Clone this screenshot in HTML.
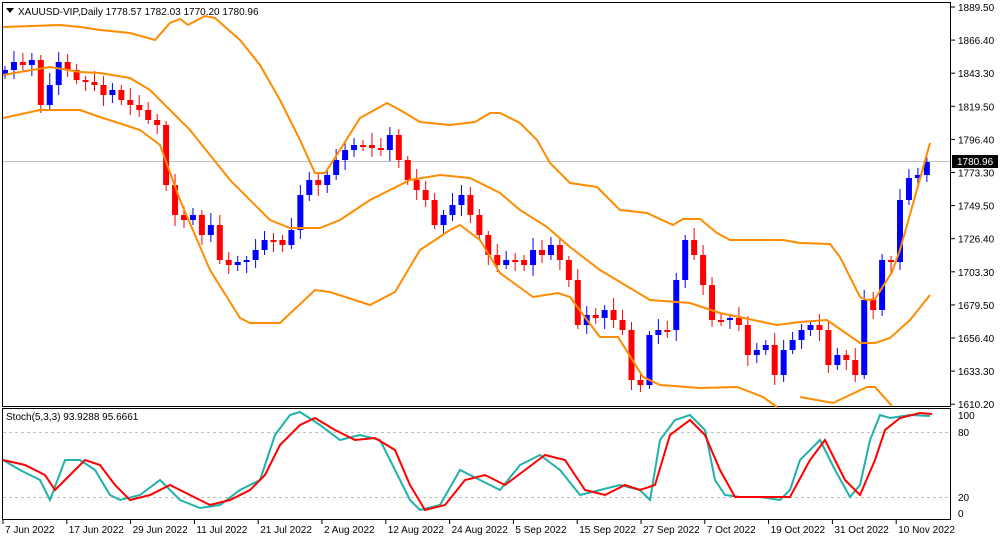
<!DOCTYPE html>
<html><head><meta charset="utf-8"><style>
html,body{margin:0;padding:0;background:#fff;width:1000px;height:543px;overflow:hidden}
svg{display:block;font-family:"Liberation Sans",sans-serif;font-size:10px}
</style></head><body>
<svg id="s" width="1000" height="543" xmlns="http://www.w3.org/2000/svg">
<rect x="0" y="0" width="1000" height="543" fill="#fff"/>
<rect x="2.5" y="2.5" width="948" height="404" fill="none" stroke="#000"/>
<rect x="2.5" y="408.5" width="948" height="111" fill="none" stroke="#000"/>
<line x1="3" y1="161.5" x2="950" y2="161.5" stroke="#c0c0c0"/>
<line x1="3" y1="432.5" x2="950" y2="432.5" stroke="#c0c0c0" stroke-dasharray="3,3"/>
<line x1="3" y1="497.5" x2="950" y2="497.5" stroke="#c0c0c0" stroke-dasharray="3,3"/>
<g id="c"></g>
<polyline fill="none" stroke="#ff8c00" stroke-width="2" points="3,27 60,25 80,27 100,30 130,33 155,40 170,23 180,19 188,25 205,16 215,18 240,40 260,65 280,100 300,140 315,173 325,173 340,150 360,118 387,103 400,110 420,122 450,125 475,122 490,113 500,113 520,123 537,140 550,163 570,183 597,187 620,210 647,213 673,225 683,219 700,219 717,233 730,240 783,240 800,243 830,244 840,257 860,297 867,300 875,299 892,272 900,250 930,143"/>
<polyline fill="none" stroke="#ff8c00" stroke-width="2" points="3,75 20,72 50,67 80,72 100,73 130,78 150,90 190,130 230,180 270,220 290,228 320,228 340,220 370,200 410,180 440,175 470,178 500,193 520,210 547,227 570,247 600,270 650,300 690,303 720,313 777,325 800,322 827,320 860,343 875,343 890,338 910,320 930,295"/>
<path fill="none" stroke="#ff8c00" stroke-width="2" d="M3,118 L40,110 80,110 100,117 140,130 160,145 180,200 210,270 240,318 250,323 280,323 315,290 330,292 370,305 395,292 420,250 450,230 460,225 480,240 500,273 533,297 558,293 570,297 587,320 600,337 618,337 643,377 660,385 700,388 737,387 763,397 777,407 M800,397 L833,403 867,387 875,387 892,406"/>
<polyline fill="none" stroke="#20b2aa" stroke-width="2" points="3,460 20,470 40,480 50,500 65,460 80,460 95,470 110,495 120,500 140,495 160,480 180,500 200,508 220,505 240,490 260,480 275,435 290,415 300,412 320,425 340,440 360,435 380,440 395,470 410,500 420,510 440,505 460,470 480,480 500,490 520,465 540,455 560,470 580,495 600,490 620,485 640,490 650,500 660,440 675,420 690,415 705,430 715,480 725,495 740,497 760,497 780,500 790,490 800,460 820,440 835,470 850,497 860,485 870,440 880,415 890,418 910,415 930,416"/>
<polyline fill="none" stroke="#ff0000" stroke-width="2" points="3,460 25,465 45,475 55,490 70,475 85,460 100,465 115,485 130,500 150,495 170,485 190,495 210,505 230,500 250,490 265,475 280,445 300,425 315,418 335,430 355,440 375,438 395,450 410,485 425,510 445,505 465,480 485,475 505,485 525,470 545,455 565,460 585,490 605,495 625,485 640,490 655,485 670,435 690,420 705,435 720,470 735,497 760,497 790,497 810,460 825,440 845,480 860,495 875,460 885,430 900,418 920,413 932,414"/>
<path d="M6,8 L14,8 L10,13 Z" fill="#000"/>
<text x="18" y="15" fill="#000">XAUUSD-VIP,Daily  1778.57 1782.03 1770.20 1780.96</text>
<text x="6" y="420" fill="#000">Stoch(5,3,3) 93.9288 95.6661</text>
<g id="ax" fill="#000"></g>
<rect x="952" y="155" width="46" height="13" fill="#000"/>
<text x="957" y="165" fill="#fff">1780.96</text>
</svg>
<script>
(function(){
var ns="http://www.w3.org/2000/svg",g=document.getElementById('c'),ax=document.getElementById('ax');
function el(p,t,a,txt){var e=document.createElementNS(ns,t);for(var k in a)e.setAttribute(k,a[k]);if(txt!==undefined)e.textContent=String(txt);p.appendChild(e);return e;}
var cl=[70,62,65,60,105,85,62,70,80,82,85,95,90,100,105,110,120,125,185,215,220,215,235,225,260,265,262,260,250,240,240,245,230,195,180,185,175,160,150,145,145,148,150,135,160,180,190,200,225,215,205,195,215,235,255,265,260,260,265,250,255,245,260,280,325,315,318,310,320,330,380,385,335,330,330,280,240,255,285,320,320,318,325,355,350,345,375,350,340,330,325,330,365,355,360,375,300,310,260,262,200,178,175,162];
var pv=75;
for(var i=0;i<cl.length;i++){var x=5+i*8.95,o=pv,c=cl[i];if(Math.abs(o-c)<2)c=o+2;
var tp=Math.min(o,c),bt=Math.max(o,c),col=c<o?'#0000ff':'#ff0000';
var hi=tp-4-(i*7%9),lo=bt+4+(i*5%8);
el(g,'line',{x1:x,y1:hi,x2:x,y2:lo,stroke:col,'stroke-width':1});
el(g,'rect',{x:x-3,y:tp,width:6,height:bt-tp,fill:col});
pv=cl[i];}
var pl=["1889.50","1866.40","1843.30","1819.50","1796.40","1773.30","1749.50","1726.40","1703.30","1679.50","1656.40","1633.30","1610.20"];
for(var j=0;j<pl.length;j++){var y=7+j*33.1;el(ax,'line',{x1:951,y1:y,x2:955,y2:y,stroke:'#000'});el(ax,'text',{x:958,y:y+4},pl[j]);}
[["100",415],["80",432],["20",497],["0",513]].forEach(function(a){el(ax,'text',{x:958,y:a[1]+4},a[0]);});
var d=["7 Jun 2022","17 Jun 2022","29 Jun 2022","11 Jul 2022","21 Jul 2022","2 Aug 2022","12 Aug 2022","24 Aug 2022","5 Sep 2022","15 Sep 2022","27 Sep 2022","7 Oct 2022","19 Oct 2022","31 Oct 2022","10 Nov 2022"];
for(var k=0;k<d.length;k++){var x=3+k*63.8;el(ax,'line',{x1:x,y1:520,x2:x,y2:524,stroke:'#000'});el(ax,'text',{x:x+2,y:533},d[k]);}
})();
</script>
</body></html>
